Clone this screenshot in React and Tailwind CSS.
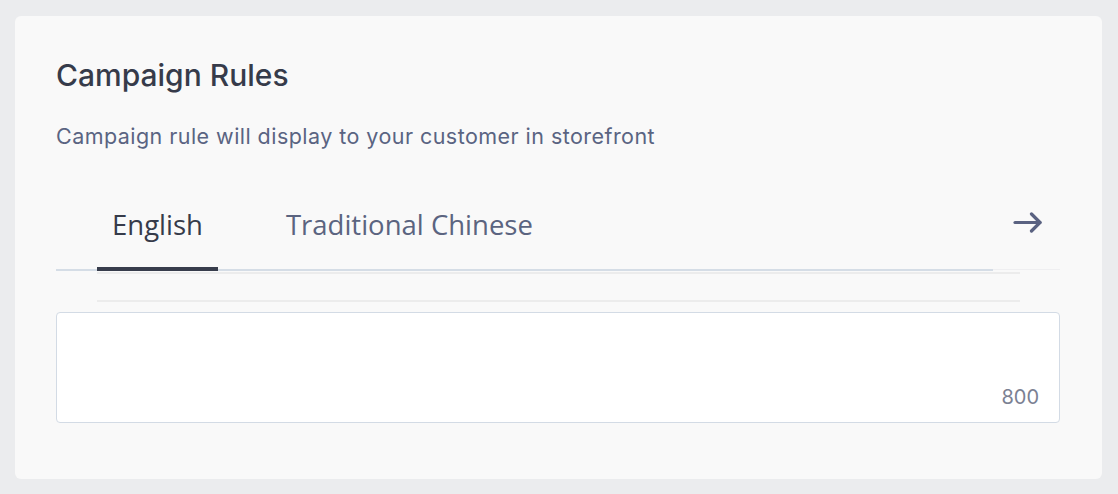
const TABS = [
  { key: 'en', label: 'English' },
  { key: 'zh', label: 'Traditional Chinese' },
]

function Arrow() {
  return (
    <svg width="30" height="22" viewBox="0 0 30 22" fill="none" stroke="currentColor" strokeWidth="3.2" strokeLinecap="round" strokeLinejoin="round">
      <path d="M2 10.5h25" />
      <path d="M18.5 2l8.5 8.5-8.5 8.5" />
    </svg>
  )
}

export default function App() {
  const active = 'en'

  return (
    <div className="h-[494px] bg-[#ebecee] pt-[16px] pl-[15px] pr-[16px] pb-[15px]" style={{ fontFamily: 'Inter, "Noto Sans", sans-serif' }}>
      <div className="h-full rounded-md bg-[#f9f9f9] pl-[41px] pr-[42px] pt-[41px]">

        {/* Header */}
        <h2 className="text-[30px] leading-[36px] font-medium text-[#363b4a]">Campaign Rules</h2>
        <p className="mt-[29px] text-[21.5px] leading-[28px] text-[#5a6482] tracking-[0.45px]">
          Campaign rule will display to your customer in storefront
        </p>

        {/* Tabs */}
        <div className="mt-[57px] flex items-start" style={{ fontFamily: '"Open Sans", sans-serif' }}>
          <div className="flex-1 border-b-2 border-[#d5dde6] pl-[41px] flex">
            {TABS.map((t, i) => (
              <button key={t.key}
                className={`relative px-[15px] pb-[26px] text-[27.5px] leading-[36px] ${i > 0 ? 'ml-[53px]' : ''} ${
                  active === t.key ? 'text-[#363b4a]' : 'text-[#5b6480]'
                }`}>
                {t.label}
                {active === t.key && (
                  <span className="absolute left-0 right-0 -bottom-[2px] h-[4px] bg-[#383d4c]" />
                )}
              </button>
            ))}
          </div>
          <div className="w-[67px] h-[64px] flex flex-col">
            <div className="flex-1 flex items-start justify-center pt-[5px] pl-[2px] text-[#5a6281]">
              <Arrow />
            </div>
            <div className="h-[1px] bg-[#efeff1] mb-[1px]" />
          </div>
        </div>

        {/* Tab panel */}
        <div className="mt-[1px] ml-[41px] mr-[40px] h-[30px] border-t-2 border-b-2 border-[#ececec]" />

        {/* Textarea */}
        <div className="mt-[10px] h-[111px] rounded bg-white border border-[#d3dbe5] relative">
          <span className="absolute right-[20px] bottom-[13px] text-[20px] leading-[24px] text-[#7b8193]">800</span>
        </div>

      </div>
    </div>
  )
}
